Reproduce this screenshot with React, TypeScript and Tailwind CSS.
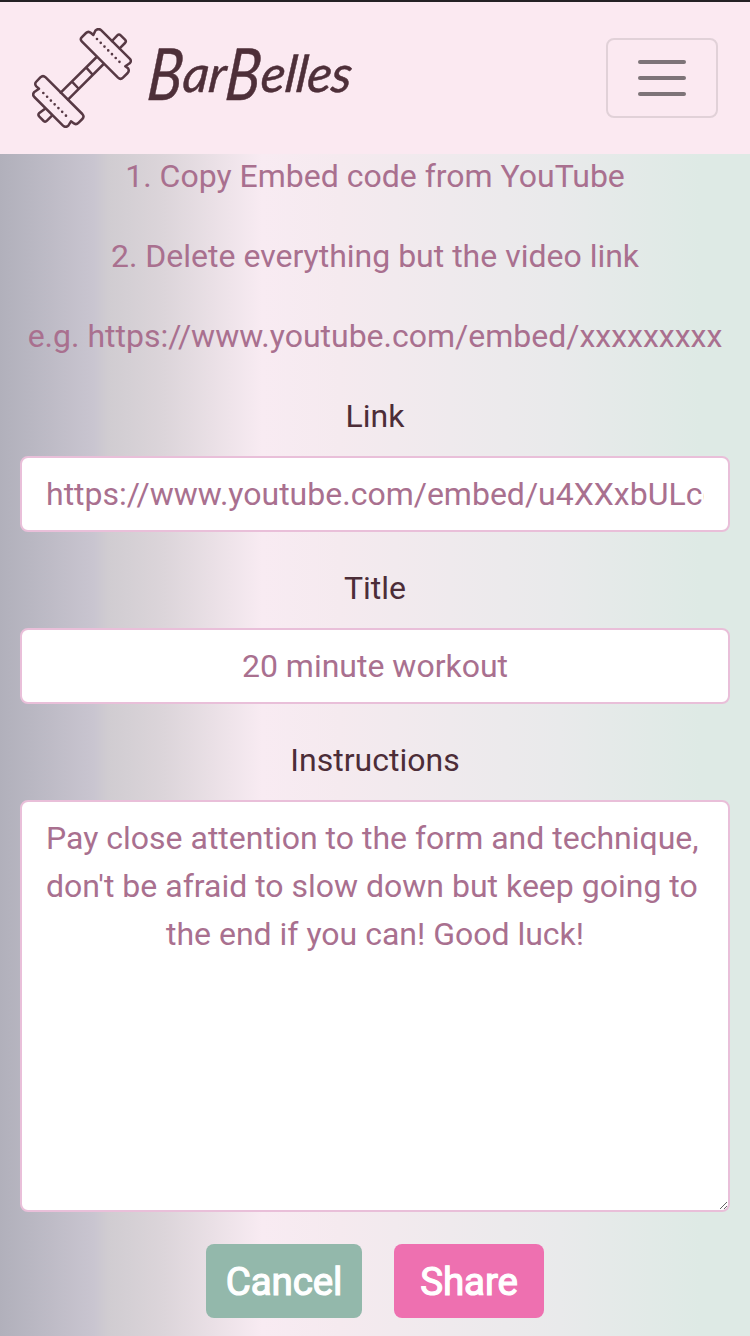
import React from "react";

function Dumbbell() {
  return (
    <svg className="h-[100px] w-[100px] shrink-0" viewBox="36 39 300 300" fill="none" stroke="#573944" strokeWidth="7.5" strokeLinejoin="round" strokeLinecap="round">
      <path d="M185 67 L198 54 Q205 47 213 54 L220 60 L226 47 Q235 38 244 46 L329 131 Q336 138 329 145 L316 154 L324 160 Q329 167 323 174 L309 188 Q302 195 294 188 L186 80 Q179 73 185 67Z" />
      <path d="M48 201 L61 187 Q69 180 77 187 L187 297 Q194 305 187 312 L176 323 Q168 331 160 324 L153 319 L145 332 Q137 339 129 332 L43 246 Q36 238 43 231 L57 221 L49 214 Q43 207 48 201Z" />
      <path d="M230 126 L122 233 M251 147 L144 254 M199 158 L216 177 M156 200 L174 219" />
      <path d="M276 78 L292 61 Q297 56 302 61 L315 74 Q320 79 315 84 L299 100" />
      <path d="M75 281 L57 295 Q53 300 58 305 L71 318 Q76 322 81 317 L96 302" />
      <path strokeWidth="8" strokeDasharray="0 16" d="M231 72 L299 141 M70 234 L138 302" />
    </svg>
  );
}

function Initial() {
  return <span className="relative top-[8px] -mr-2 inline-block origin-left scale-x-[0.8] text-[72px] leading-none">B</span>;
}

function Field({ label, children }: { label: string; children: React.ReactNode }) {
  return (
    <label className="flex flex-col gap-4 text-center text-[#4c2d38]">
      <span className="block h-12 leading-[48px]">{label}</span>
      {children}
    </label>
  );
}

export default function App() {
  const field = "block w-full rounded-lg border-2 border-[#e9bfd9] bg-white px-6 text-center text-[#a9708f] outline-none";
  return (
    <div className="flex h-[1336px] w-[750px] flex-col overflow-hidden bg-[linear-gradient(90deg,#b1b0bb_0px,#c9c5d0_94px,#d0ccd1_108px,#dcd5da_165px,#f8ebf2_262px,#f5eaef_340px,#e9eaeb_560px,#deeae5_700px,#deeae5_750px)] font-['Roboto',sans-serif] text-[32px] leading-[48px]">
      <header className="flex h-[154px] shrink-0 items-center justify-between border-t-2 border-[#242124] bg-[#fbe9f1] px-8">
        <div className="flex items-center gap-4">
          <Dumbbell />
          <div className="h-[100px] origin-left -skew-x-6 whitespace-nowrap font-['Satisfy','Lato',cursive] text-[51px] leading-[76px] tracking-[-0.3px] text-[#4e2f39] italic [-webkit-text-stroke:0.5px_#4e2f39]">
            <Initial />ar<Initial />elles
          </div>
        </div>
        <button aria-label="Menu" className="flex h-20 w-28 flex-col items-center justify-center gap-3 rounded-lg border-2 border-[#e1d1d8]">
          <span className="h-1 w-12 rounded-full bg-[#7d7478]" />
          <span className="h-1 w-12 rounded-full bg-[#7d7478]" />
          <span className="h-1 w-12 rounded-full bg-[#7d7478]" />
        </button>
      </header>
      <main className="flex flex-col px-5">
        <div className="-mt-0.5 flex flex-col gap-8 whitespace-nowrap text-center text-[#a9708f]">
          <p>1. Copy Embed code from YouTube</p>
          <p>2. Delete everything but the video link</p>
          <p>e.g. https://www.youtube.com/embed/xxxxxxxxx</p>
        </div>
        <form className="mt-8 flex flex-col gap-8">
          <Field label="Link">
            <input className={`${field} h-[76px]`} defaultValue="https://www.youtube.com/embed/u4XXxbULco" />
          </Field>
          <Field label="Title">
            <input className={`${field} h-[76px]`} defaultValue="20 minute workout" />
          </Field>
          <Field label="Instructions">
            <textarea className={`${field} h-[412px] resize py-3`} defaultValue={"Pay close attention to the form and technique, \ndon't be afraid to slow down but keep going to \nthe end if you can! Good luck!"} />
          </Field>
          <div className="flex justify-center gap-8 text-[38.5px] text-white [-webkit-text-stroke:1.2px_#fff]">
            <button type="button" className="h-[74px] w-[156px] rounded-lg bg-[#93b8ab] pt-px tracking-[-0.1px]">Cancel</button>
            <button type="button" className="h-[74px] w-[150px] rounded-lg bg-[#ee70b0] pt-px tracking-[-0.1px]">Share</button>
          </div>
        </form>
      </main>
    </div>
  );
}
